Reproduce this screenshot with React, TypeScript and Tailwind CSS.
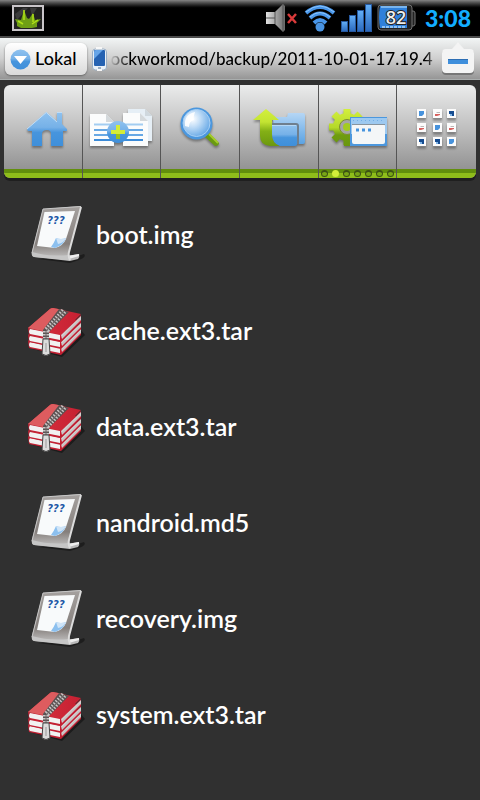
import type { ReactNode } from "react";

type FileKind = "image" | "archive";

const FILES: { name: string; kind: FileKind }[] = [
  { name: "boot.img", kind: "image" },
  { name: "cache.ext3.tar", kind: "archive" },
  { name: "data.ext3.tar", kind: "archive" },
  { name: "nandroid.md5", kind: "image" },
  { name: "recovery.img", kind: "image" },
  { name: "system.ext3.tar", kind: "archive" },
];

/* Gradients shared by all the icons */
function Gradients() {
  return (
    <svg className="absolute h-0 w-0" aria-hidden="true">
      <defs>
        <linearGradient id="blue" x1="0" y1="0" x2="0" y2="1">
          <stop offset="0" stopColor="#8fc2ef" />
          <stop offset="0.45" stopColor="#76b1e8" />
          <stop offset="0.6" stopColor="#4795dd" />
          <stop offset="1" stopColor="#3f8fda" />
        </linearGradient>
        <linearGradient id="paleBlue" x1="0" y1="0" x2="0" y2="1">
          <stop offset="0" stopColor="#b5d6f5" />
          <stop offset="1" stopColor="#5ba3e3" />
        </linearGradient>
        <linearGradient id="deepBlue" x1="0" y1="0" x2="0" y2="1">
          <stop offset="0" stopColor="#64b0f8" />
          <stop offset="1" stopColor="#2a68bc" />
        </linearGradient>
        <linearGradient id="green" x1="0" y1="0" x2="0" y2="1">
          <stop offset="0" stopColor="#d3ef3c" />
          <stop offset="0.35" stopColor="#c3e432" />
          <stop offset="0.6" stopColor="#84b016" />
          <stop offset="1" stopColor="#6b980f" />
        </linearGradient>
        <linearGradient id="gear" gradientUnits="userSpaceOnUse" x1="0" y1="6" x2="0" y2="43">
          <stop offset="0" stopColor="#d3ef3c" />
          <stop offset="0.5" stopColor="#b5d92a" />
          <stop offset="0.7" stopColor="#6f9c10" />
          <stop offset="1" stopColor="#6a970f" />
        </linearGradient>
        <linearGradient id="metal" x1="0" y1="0" x2="1" y2="0">
          <stop offset="0" stopColor="#e2e2e2" />
          <stop offset="1" stopColor="#6b6b6b" />
        </linearGradient>
        <linearGradient id="stand" x1="0" y1="0" x2="0" y2="1">
          <stop offset="0" stopColor="#a5a19f" />
          <stop offset="0.7" stopColor="#857f7c" />
          <stop offset="1" stopColor="#c9c9c9" />
        </linearGradient>
        <linearGradient id="cover" x1="0" y1="0" x2="1" y2="0">
          <stop offset="0" stopColor="#d8323f" />
          <stop offset="1" stopColor="#c62032" />
        </linearGradient>
        <radialGradient id="lens" cx="0.35" cy="0.35" r="0.7">
          <stop offset="0" stopColor="#ffffff" />
          <stop offset="0.4" stopColor="#c5dff7" />
          <stop offset="1" stopColor="#68a9e6" />
        </radialGradient>
      </defs>
    </svg>
  );
}

function StatusBar() {
  return (
    <header className="flex h-[38px] items-center border-b-2 border-[#4a4a4a] bg-linear-to-b from-[#858585] from-0% via-[#000000] via-25% to-[#000000] pr-[9px] pl-3">
      <svg width="32" height="26" viewBox="0 0 32 26" aria-hidden="true">
        <rect x="1" y="1" width="30" height="24" fill="#222" stroke="#c9c5c9" strokeWidth="2" />
        <path d="M3 9l8-6h5L5 15zM18 3h7l-5 8z" fill="#3c3c3c" />
        <path
          d="M3 14l6 1 3-10 3 8 2 1 4-6 2 7 6-1-4 4v4l-5 1H9l-4-2v-3z"
          fill="#6f9f14"
        />
        <path d="M12 5v10M21 9v8M6 16l5 3M26 15l-6 4" stroke="#b0e018" strokeWidth="1.5" />
      </svg>

      <div className="ml-auto flex items-center gap-[5px]">
        <svg width="34" height="30" viewBox="0 0 34 30" aria-hidden="true">
          <path d="M1 9h9L18 1l2 2v24l-2 2-8-8H1z" fill="url(#metal)" />
          <path d="M10 9v12M1 15h9M18 2v26" stroke="#555" />
          <path d="M23 11l8 9M31 11l-8 9" stroke="#d93a3a" strokeWidth="2.5" />
        </svg>
        <svg width="32" height="28" viewBox="0 0 32 28" aria-hidden="true">
          <g fill="none" stroke="#4896ea" strokeWidth="4">
            <path d="M2 9Q16-3 30 9" />
            <path d="M6 14Q16 5 26 14" />
            <path d="M10 19Q16 13 22 19" />
          </g>
          <path d="M2 8Q16-4 30 8M6 13Q16 4 26 13" fill="none" stroke="#8cc4fa" />
          <circle cx="16" cy="23" r="4.500" fill="#4a94e2" />
        </svg>
        <svg width="31" height="28" viewBox="0 0 31 28" aria-hidden="true">
          <g fill="url(#deepBlue)" stroke="#2759a0">
            <rect x="0.500" y="17.500" width="6" height="10" />
            <rect x="8.500" y="11.500" width="6" height="16" />
            <rect x="16.500" y="6.500" width="6" height="21" />
            <rect x="24.500" y="0.500" width="6" height="27" />
          </g>
        </svg>
        <svg width="39" height="28" viewBox="0 0 39 28" aria-hidden="true">
          <rect x="33" y="7" width="5" height="15" rx="2" fill="#222" stroke="#777" />
          <rect x="1" y="1" width="34" height="25" rx="3" fill="#222" stroke="#707070" />
          <path d="M3 2h27v22H3Q1 13 3 2z" fill="#2f80da" />
          <path d="M4 2h26v2H4z" fill="#78b4ee" />
          <path d="M5 23h24" stroke="#8ec2f2" strokeWidth="2" strokeDasharray="3 1" />
          <text
            x="19"
            y="20"
            textAnchor="middle"
            className="font-['Open_Sans',sans-serif] text-[18px] font-semibold"
            fill="#eee"
            stroke="#222"
            strokeWidth="2"
            paintOrder="stroke"
          >
            82
          </text>
        </svg>
        <time className="ml-1 text-[23px] leading-none font-black text-[#12adff]">3:08</time>
      </div>
    </header>
  );
}

function AddressBar() {
  return (
    <div className="flex h-[42px] items-center border-b border-[#a9adad] bg-linear-to-b from-[#f2f5f5] via-[#cfcfcf] via-50% to-[#969696] pt-px pr-[5px] pl-[5px]">
      <button
        type="button"
        className="flex h-8 shrink-0 items-center gap-1 rounded-md bg-linear-to-b from-white to-[#dadada] pr-[11px] pl-[5px] text-[18px] leading-none font-medium text-black shadow-[0_1px_2px_#666]"
      >
        <svg width="21" height="21" viewBox="0 0 21 21" aria-hidden="true">
          <circle cx="10.500" cy="10.500" r="10" fill="url(#blue)" />
          <path d="M4 7h13l-6.500 8z" fill="#fff" />
        </svg>
        <span className="pb-0.5">Lokal</span>
      </button>

      <svg className="ml-[5px] shrink-0" width="15" height="24" viewBox="0 0 15 24" aria-hidden="true">
        <rect x="0.500" y="2" width="14" height="21" rx="3" fill="#e9f0f7" stroke="#9aaec4" />
        <path d="M4 1h6M5 23h5" stroke="#f7f7f7" strokeWidth="2" />
        <rect x="2" y="3" width="11" height="16" rx="1" fill="#2562b2" />
        <path d="M2 5q0-2 2-2h7L2 12z" fill="#67a5e8" />
        <path d="M6 21h3" stroke="#4a6d92" />
      </svg>

      <div className="ml-[3px] min-w-0 flex-1 overflow-hidden mask-[linear-gradient(to_right,transparent,black_20px,black_calc(100%-16px),transparent)] text-[17px] leading-7 font-medium whitespace-nowrap text-black">
        ockworkmod/backup/2011-10-01-17.19.4
      </div>

      <button type="button" aria-label="Collapse" className="shrink-0">
        <svg width="34" height="36" viewBox="0 0 34 36">
          <path
            d="M5 9h6l6-7 6 7h6q4 0 4 4v17q0 4-4 4H5q-4 0-4-4V13q0-4 4-4z"
            fill="#777"
          />
          <path
            d="M5 8h6l6-7 6 7h6q4 0 4 4v16q0 4-4 4H5q-4 0-4-4V12q0-4 4-4z"
            fill="#f4f4f4"
          />
          <path d="M7 18h20v5H7z" fill="#3f8fdc" />
          <path d="M7 18h20v1H7z" fill="#2d6eb4" />
        </svg>
      </button>
    </div>
  );
}

function HomeIcon() {
  return (
    <>
      <path
        d="M39.300 9l10.700 9V9h5v12l5 5v2h-4v15H44V31q0-4-4-4-5 0-5 4v12H25V28h-4l-1-2z"
        fill="url(#blue)"
      />
      <path d="M20 26L39.300 9.500 50 19M50 9.500h5" fill="none" stroke="#c0ddf6" />
    </>
  );
}

function CopyIcon() {
  return (
    <>
      <path d="M43 6h17l7 7v25H43z" fill="#e6eff6" />
      <path d="M60 6v7h7z" fill="#cfd8de" />
      <path d="M5 11h16l8 8v24H5z" fill="#fbfcfc" />
      <path d="M21 11v8h8z" fill="#d4d9dc" />
      <path d="M38 10h17l8 8v25H38z" fill="#fbfcfc" />
      <path d="M55 10v8h8z" fill="#d4d9dc" />
      <path d="M9 21.500h49" stroke="#a3cdf1" strokeWidth="2" />
      <path d="M9 27h49M9 32h49" stroke="#67a8e4" strokeWidth="2" />
      <path d="M9 37h49" stroke="#3b8bd8" strokeWidth="2" />
      <circle cx="33" cy="29" r="11" fill="url(#blue)" />
      <path d="M31 22h4v5h5v4h-5v5h-4v-5h-5v-4h5z" fill="#d4ec38" />
      <path d="M31 31h4v5h-4z" fill="#9bc31c" />
    </>
  );
}

function SearchIcon() {
  return (
    <>
      <path d="M41 34l4-4 10 10q0 3-4 3z" fill="#6a9a12" />
      <path d="M45 31l9 9" stroke="#a4cc2a" strokeWidth="2" />
      <circle cx="32.500" cy="20.500" r="16" fill="#4b97de" />
      <circle cx="32.500" cy="20" r="13.500" fill="url(#lens)" stroke="#a9d0f4" />
      <path d="M21 23q-1-12 10-14-2 6-1 8-5 1-5 7z" fill="#fff" opacity="0.9" />
    </>
  );
}

function FolderUpIcon() {
  return (
    <>
      <path d="M30 16q0-2 2-2h12l1-4h15q2 0 2 2v27q0 2-2 2H33z" fill="url(#paleBlue)" />
      <path d="M29 21h24q2 0 2 2v18" fill="none" stroke="#6f7f8e" strokeWidth="2" />
      <path d="M23 6l13 11h-7v14q0 9 8 12H27q-10-1-10-10V17h-7z" fill="url(#green)" />
      <path d="M29 22h23q2 0 2 2v17q0 2-2 2H37q-8-3-8-12z" fill="url(#blue)" />
      <path d="M29 22.500h24" stroke="#b4d7f6" />
    </>
  );
}

function SettingsWindowIcon() {
  return (
    <>
      <path
        d="M26 6v36M8 24h36M13 11l26 26M39 11L13 37"
        fill="none"
        stroke="url(#gear)"
        strokeWidth="7"
      />
      <path d="M23 6h6v8h-6zM8 21h8v6H8zM23 36h6v7h-6z" fill="url(#gear)" />
      <circle cx="26" cy="24" r="14" fill="url(#gear)" />
      <circle cx="26" cy="24" r="7.500" fill="#a5a5a5" stroke="#7c8f2f" />
      <circle cx="26" cy="24" r="4" fill="#a4cc20" />
      <rect x="29" y="14" width="37" height="29" fill="#4c97dd" />
      <rect x="30" y="15" width="36" height="16" fill="#9dc9f0" />
      <path d="M32 17.500h32" stroke="#72afe8" strokeDasharray="1 3" />
      <rect x="31" y="21" width="33" height="20" rx="2" fill="#f4f6f7" />
      <path d="M31 21.500h33" stroke="#88949e" />
      <path d="M35 27h3M41 27h3M47 27h3" stroke="#4794de" strokeWidth="3" />
    </>
  );
}

function GridIcon() {
  const tiles = ["b", "r", "d", "r", "b", "r", "d", "d", "b"];
  const xs = [16, 32, 46];
  return (
    <>
      {tiles.map((tile, i) => (
        <g key={i} transform={`translate(${xs[i % 3]} ${6 + Math.floor(i / 3) * 14})`}>
          <rect y="1" width="9" height="9" fill="#888" opacity="0.6" />
          <rect width="9" height="9" fill="#fcfcfc" />
          {tile === "b" && <path d="M2 2h5v3L5 7H2z" fill="#4792dc" />}
          {tile === "d" && <path d="M2 2h5v5H5V5H2z" fill="#174d91" />}
          {tile === "d" && <path d="M3 5h2v2H3z" fill="#7fb5e8" />}
          {tile === "r" && <path d="M2 5h5v1L4 7H2z" fill="#d7605e" />}
          {tile === "r" && <path d="M4 3h3v1H3z" fill="#b9b9b9" />}
        </g>
      ))}
    </>
  );
}

const TOOLS: { label: string; icon: ReactNode; paged?: boolean }[] = [
  { label: "Home", icon: <HomeIcon /> },
  { label: "Copy", icon: <CopyIcon /> },
  { label: "Search", icon: <SearchIcon /> },
  { label: "Parent folder", icon: <FolderUpIcon /> },
  { label: "Settings", icon: <SettingsWindowIcon />, paged: true },
  { label: "View", icon: <GridIcon /> },
];

function Toolbar() {
  return (
    <nav className="px-1 pt-[5px] pb-2">
      <div className="grid grid-cols-6 divide-x divide-[#555] overflow-hidden rounded-md bg-linear-to-b from-[#ebecec] via-[#bcbcbc] via-50% to-[#8a8a8a] shadow-[0_3px_0_#1f1f1f]">
        {TOOLS.map((tool) => (
          <button
            key={tool.label}
            type="button"
            aria-label={tool.label}
            className="relative flex h-[93px] flex-col items-center"
          >
            <span className="flex flex-1 items-center">
              <svg
                width="72"
                height="48"
                viewBox="0 0 72 48"
                className="drop-shadow-[0_2px_1px_rgba(0,0,0,0.35)]"
              >
                {tool.icon}
              </svg>
            </span>
            <span className="h-1 w-full bg-[#628f0d]" />
            <span className="h-[5px] w-full bg-[#8fbd1a]" />

            {/* Page dots */}
            {tool.paged && (
              <span className="absolute inset-x-0 bottom-0 flex h-2 justify-between px-0.5">
                {[0, 1, 2, 3, 4, 5, 6].map((dot) => (
                  <span
                    key={dot}
                    className={
                      dot === 1
                        ? "h-[7px] w-[7px] rounded-full bg-[#d3f03a]"
                        : "h-[7px] w-[7px] rounded-full border border-t-2 border-[#3c5214] bg-[#78a616]"
                    }
                  />
                ))}
              </span>
            )}
          </button>
        ))}
      </div>
    </nav>
  );
}

function ImageFileIcon() {
  return (
    <svg width="64" height="64" viewBox="0 0 64 64" className="shrink-0" aria-hidden="true">
      <path d="M14 57l34-1 12-4q3 3-5 6l-9 3z" fill="#1d1d1d" />
      <path d="M43 54l12-2q1 3-1 5l-8 2z" fill="#b9b9b9" />
      <path d="M43 54l12-2v2l-10 3z" fill="#efefef" />
      <path d="M19 7l37-3q2 0 1 2L45 50q0 4 2 8l-37-3q-3-1-2-6z" fill="url(#stand)" />
      <path d="M8 50q17 5 37 3l1 6-36-4q-3-1-2-5z" fill="#c6c6c6" />
      <path d="M57 5L45 50q-1 4 1 8" fill="none" stroke="#dcdcdc" strokeWidth="2" />
      <path d="M57 4.500L19 7 8 51" fill="none" stroke="#c8c8c8" />
      <path d="M20.500 10L51 9l-9 28q-3 7-11 9l-18-2z" fill="#f8fafb" />
      <path d="M27 45q3-4 5-9 5 2 10 0-2 7-11 10z" fill="#8cc0ef" />
      <path d="M32 36q5 2 10 0-2 5-8 6z" fill="#cfe4f7" />
      <text
        x="32"
        y="22"
        textAnchor="middle"
        className="font-['DejaVu_Sans',sans-serif] text-[10px] font-bold italic"
        fill="#2057a6"
      >
        ???
      </text>
    </svg>
  );
}

function ArchiveFileIcon() {
  return (
    <svg width="64" height="64" viewBox="0 0 64 64" className="shrink-0" aria-hidden="true">
      <path d="M9 51l29 8 23-22-4-5z" fill="#1c1c1c" />
      {/* Three volumes, drawn from the bottom up */}
      {[13, 7, 0].map((y) => (
        <g key={y} transform={`translate(0 ${y})`}>
          <path d="M4 30l33 7 20-20v7L37 44 5 37z" fill="#c21f32" />
          <path d="M6 31l30 6v5L6 36q-2-2 0-5z" fill="#f1f1f1" />
          <path d="M37 37l20-19v4L38 41z" fill="#d2cfcf" />
          <path d="M38 39.500l18-18" stroke="#a6a2a2" strokeWidth="0.500" />
          <path d="M4 30l22-19q1-1 3-1l28 6-20 20z" fill="url(#cover)" />
        </g>
      ))}
      <path d="M4 30l22-19q1-1 3-1l11 2-21 21z" fill="#dd5c5f" />
      <path d="M35 11l10 3-20 20v12h-6V32z" fill="#5a5252" />
      <path
        d="M40 13L22 33v11"
        fill="none"
        stroke="#c9c5c5"
        strokeWidth="6"
        strokeDasharray="1.500 1.500"
      />
      <path d="M40 13L22 33v10" fill="none" stroke="#6a6464" />
      <path d="M19 41h6l1 15q-4 3-8 0z" fill="#dcdcdc" stroke="#454545" />
      <path d="M22 45v9" stroke="#999" />
    </svg>
  );
}

export default function App() {
  return (
    <div className="min-h-screen bg-[#303030] font-[Lato,'Noto_Sans',sans-serif] text-white">
      <Gradients />
      <StatusBar />
      <AddressBar />
      <Toolbar />
      <ul>
        {FILES.map((file) => (
          <li key={file.name}>
            <button type="button" className="flex h-24 w-full items-center gap-2 pl-6 text-left">
              {file.kind === "image" ? <ImageFileIcon /> : <ArchiveFileIcon />}
              <span className="text-[25px] leading-8 font-semibold">{file.name}</span>
            </button>
          </li>
        ))}
      </ul>
    </div>
  );
}
